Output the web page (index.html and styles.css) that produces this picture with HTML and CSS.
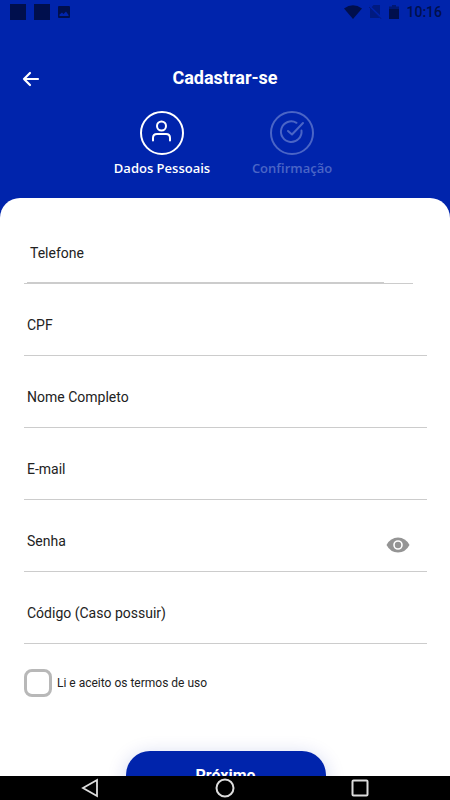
FILE: index.html
```
<!DOCTYPE html>
<html lang="pt-BR">
<head>
<meta charset="utf-8">
<meta name="viewport" content="width=device-width, initial-scale=1">
<title>Cadastrar-se</title>
<link rel="stylesheet" href="styles.css">
</head>
<body>
<div class="app">
  <div class="status">
    <div class="status-group">
      <span class="block"></span>
      <span class="block"></span>
      <svg class="picture" width="12" height="12" viewBox="0 0 12 12"><rect width="12" height="12" rx="1" fill="#000f4d"/><path d="M1.500 10v-1.500L4 6.500l1.500 1.500L8 5.500 10.500 9v1z" fill="#0024ac"/></svg>
    </div>
    <div class="status-group status-right">
      <svg class="wifi" width="18" height="14" viewBox="0 0 18 14"><path d="M0 3.500Q9-3 18 3.500L9 14z" fill="#000f4d"/></svg>
      <svg class="sim" width="13" height="14" viewBox="0 0 13 14"><path d="M4.500 0H11v13H1V4z" fill="#001a80"/><path d="M0 1l13 12.500" stroke="#0024ac" stroke-width="2"/><path d="M0 2l12.500 12" stroke="#001a80"/></svg>
      <svg class="battery" width="10" height="14" viewBox="0 0 10 14"><path d="M3 0h4v1.500h3V4H0V1.500h3z" fill="#001873"/><path d="M0 4h10v10H0z" fill="#000f4d"/></svg>
      <span class="clock">10:16</span>
    </div>
  </div>

  <header class="header">
    <div class="title-bar">
      <button class="back" type="button" aria-label="Voltar">
        <svg width="18" height="18" viewBox="0 0 18 18" fill="none" stroke="#fff" stroke-width="2.200" stroke-linecap="round" stroke-linejoin="round"><path d="M16 10H2M8 4 2 10l6 6"/></svg>
      </button>
      <h1 class="title">Cadastrar-se</h1>
    </div>
    <ol class="steps">
      <li class="step">
        <svg width="44" height="44" viewBox="0 0 44 44" fill="none" stroke="currentColor" stroke-width="2" stroke-linecap="round"><circle cx="22" cy="22" r="21"/><circle cx="21.500" cy="15" r="4.500"/><path d="M13 29.500V27q0-4 4-4h9q4 0 4 4v2.500"/></svg>
        <span class="step-name">Dados Pessoais</span>
      </li>
      <li class="step step-next">
        <svg width="44" height="44" viewBox="0 0 44 44" fill="none" stroke="currentColor" stroke-width="2" stroke-linecap="round" stroke-linejoin="round"><circle cx="22" cy="22" r="21"/><path d="M31.500 19.500A10.300 10.300 0 1 1 26.500 11.800M18 20l4 3.500L33 12"/></svg>
        <span class="step-name">Confirmação</span>
      </li>
    </ol>
  </header>

  <main class="sheet">
    <form class="form">
      <div class="field field-phone">
        <div class="row phone-row"><label for="phone">Telefone</label><input id="phone" type="tel"></div>
      </div>
      <div class="field"><div class="row"><label for="cpf">CPF</label><input id="cpf" type="text"></div></div>
      <div class="field"><div class="row"><label for="name">Nome Completo</label><input id="name" type="text"></div></div>
      <div class="field"><div class="row"><label for="email">E-mail</label><input id="email" type="email"></div></div>
      <div class="field">
        <div class="row">
          <label for="password">Senha</label><input id="password" type="password">
          <button class="reveal" type="button" aria-label="Mostrar senha">
            <svg width="24" height="16" viewBox="0 0 24 16"><path d="M0.500 8Q4.500 0.500 12 0.500T23.500 8Q19.500 15.500 12 15.500T0.500 8z" fill="#949494"/><circle cx="12" cy="8" r="4" fill="#949494" stroke="#fff" stroke-width="1.600"/></svg>
          </button>
        </div>
      </div>
      <div class="field"><div class="row"><label for="code">Código (Caso possuir)</label><input id="code" type="text"></div></div>
      <div class="terms">
        <input id="terms" type="checkbox">
        <label for="terms">Li e aceito os termos de uso</label>
      </div>
      <button class="submit" type="submit">Próximo</button>
    </form>
  </main>

  <nav class="system-bar" aria-label="Sistema">
    <button type="button" aria-label="Voltar ao anterior"><svg width="20" height="20" viewBox="0 0 20 20" fill="none" stroke="#ddd" stroke-width="1.800"><path d="M17 2v16L3 10z"/></svg></button>
    <button type="button" aria-label="Início"><svg width="20" height="20" viewBox="0 0 20 20" fill="none" stroke="#ddd" stroke-width="2"><circle cx="10" cy="10" r="8.500"/></svg></button>
    <button type="button" aria-label="Recentes"><svg width="20" height="20" viewBox="0 0 20 20" fill="none" stroke="#ddd" stroke-width="2"><rect x="2.500" y="2.500" width="15" height="15" rx="1"/></svg></button>
  </nav>
</div>
</body>
</html>
```
FILE: styles.css
```
* {
  box-sizing: border-box;
}

body {
  margin: 0;
  font-family: Roboto, "Liberation Sans", sans-serif;
  color: #222;
}

button {
  border: 0;
  padding: 0;
  background: none;
  font: inherit;
}

svg {
  display: block;
}

.app {
  display: flex;
  flex-direction: column;
  height: 100vh;
  overflow: hidden;
  background: #0024ac;
}

.status {
  display: flex;
  justify-content: space-between;
  align-items: center;
  height: 24px;
  padding: 0 8px 0 10px;
}

.status-group {
  display: flex;
  align-items: center;
  gap: 8px;
}

.status-right {
  gap: 7px;
}

.block {
  width: 16px;
  height: 16px;
  background: #000f4d;
}

.clock {
  font-size: 14px;
  font-weight: 500;
  line-height: 24px;
  color: #000f4d;
}

.header {
  color: #fff;
}

.title-bar {
  display: grid;
  grid-template-columns: 1fr auto 1fr;
  align-items: center;
  padding: 42px 22px 0;
}

.title {
  margin: 0;
  font-size: 18px;
  font-weight: 700;
  line-height: 24px;
}

.steps {
  display: grid;
  grid-template-columns: 130px 130px;
  justify-content: center;
  margin: 0 0 0 4px;
  padding: 21px 0 20px;
  list-style: none;
}

.step {
  display: flex;
  flex-direction: column;
  align-items: center;
  gap: 3px;
}

.step-next {
  color: #4a65c6;
}

.step-name {
  font-family: "Open Sans", Roboto, sans-serif;
  font-size: 13px;
  font-weight: 600;
  line-height: 20px;
}

.sheet {
  flex: 1;
  min-height: 0;
  overflow: hidden;
  padding: 14px 23px 0 24px;
  border-radius: 20px 20px 0 0;
  background: #fff;
}

.form {
  display: flex;
  flex-direction: column;
}

.field {
  height: 72px;
  padding: 29px 3px 0;
  border-bottom: 1px solid #ccc;
}

.field-phone {
  margin-right: 14px;
  padding-right: 29px;
}

.row {
  display: flex;
  gap: 8px;
  height: 24px;
  font-size: 14px;
  line-height: 24px;
}

.phone-row {
  height: 42px;
  padding-left: 3px;
  border-bottom: 1px solid #ccc;
}

.row input {
  flex: 1;
  min-width: 0;
  height: 24px;
  padding: 0;
  border: 0;
  outline: 0;
  background: none;
  font: inherit;
}

.reveal {
  align-self: flex-end;
  height: 16px;
  margin: 0 14px 0 0;
}

.terms {
  display: flex;
  align-items: center;
  gap: 5px;
  margin-top: 25px;
  font-size: 12px;
  line-height: 20px;
}

.terms input {
  appearance: none;
  width: 28px;
  height: 28px;
  margin: 0;
  border: 3px solid #b8b8b8;
  border-radius: 8px;
  background: #fff;
}

.submit {
  align-self: center;
  width: 200px;
  height: 48px;
  margin-top: 54px;
  border-radius: 24px;
  background: #0024ac;
  box-shadow: 0 4px 20px rgba(0, 36, 172, 0.2);
  color: #fff;
  font-size: 16px;
  font-weight: 700;
}

.system-bar {
  display: flex;
  justify-content: center;
  align-items: center;
  gap: 115px;
  height: 24px;
  background: #000;
}
```
